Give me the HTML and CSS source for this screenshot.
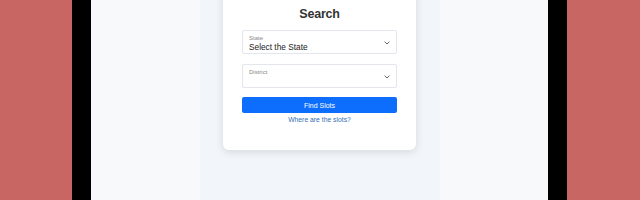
FILE: index.html
```html
<!DOCTYPE html>
<html lang="en">
<head>
<meta charset="UTF-8">
<meta name="viewport" content="width=device-width, initial-scale=1.0">
<title>Find Slots</title>
<link rel="stylesheet" href="styles.css">
</head>
<body>

<div class="device">
  <div class="screen">
    <div class="column">
      <div class="card">
        <h1>Search</h1>

        <div class="field">
          <label>State</label>
          <div class="value">Select the State</div>
          <svg class="chev" width="6" height="4" viewBox="0 0 6 4"><path d="M0.6 0.7 L3 3 L5.4 0.7" fill="none" stroke="#555" stroke-width="0.9"/></svg>
        </div>

        <div class="field district">
          <label>District</label>
          <div class="value"></div>
          <svg class="chev" width="6" height="4" viewBox="0 0 6 4"><path d="M0.6 0.7 L3 3 L5.4 0.7" fill="none" stroke="#555" stroke-width="0.9"/></svg>
        </div>

        <button class="btn">Find Slots</button>
        <a class="where" href="#">Where are the slots?</a>
      </div>
    </div>
  </div>
</div>

</body>
</html>
```

FILE: styles.css
```css
body {
  margin: 0;
  height: 200px;
  background-color: #c86663;
  font-family: "Liberation Sans", Arial, sans-serif;
  overflow: hidden;
}
.device {
  margin-left: 72px;
  width: 457px;
  height: 200px;
  border-left: 19px solid #000;
  border-right: 19px solid #000;
  background-color: #f8f9fa;
  display: flex;
  justify-content: center;
}
.column {
  display: flow-root;
  width: 240px;
  height: 200px;
  background-color: #f2f6fb;
}
.card {
  width: 155px;
  margin: -10px auto 0;
  padding: 16px 19px 26px;
  background: #fff;
  border-radius: 0 0 6px 6px;
  box-shadow: 0 2px 8px rgba(0, 0, 0, 0.12);
}
h1 {
  margin: 0 0 8px;
  font-size: 12.5px;
  line-height: 16px;
  font-weight: 600;
  letter-spacing: -0.2px;
  text-align: center;
  color: #333;
}
.field {
  position: relative;
  height: 22px;
  border: 1px solid #e3e6ea;
  border-radius: 2px;
  padding: 0 6px;
  margin-bottom: 10px;
}
.field label {
  display: block;
  font-size: 6px;
  line-height: 6px;
  padding-top: 4px;
  color: #888;
}
.field .value {
  padding-top: 1px;
  font-size: 8.3px;
  line-height: 10px;
  color: #222;
}
.chev {
  position: absolute;
  right: 6px;
  top: 10px;
}
.district {
  margin-bottom: 9px;
}
.btn {
  display: block;
  width: 100%;
  height: 16px;
  padding: 0;
  border: none;
  border-radius: 2px;
  background-color: #0d6efd;
  color: #fff;
  font-family: inherit;
  font-size: 7px;
  cursor: pointer;
}
.where {
  display: block;
  margin-top: 3px;
  text-align: center;
  font-size: 6.8px;
  line-height: 8px;
  color: #3470b6;
  text-decoration: none;
}
```
